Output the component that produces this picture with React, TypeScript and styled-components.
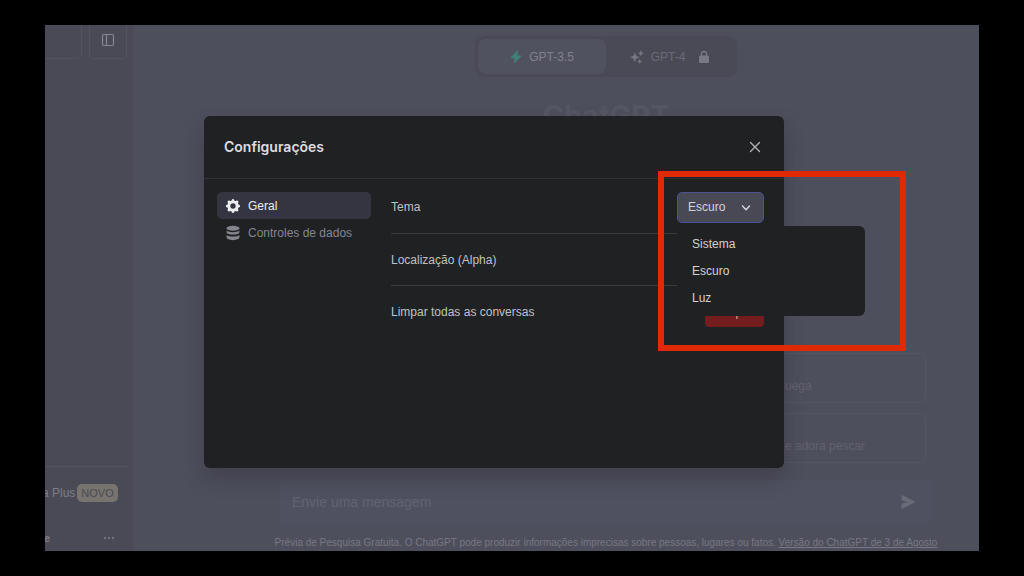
import React from "react";
import styled, { createGlobalStyle } from "styled-components";

const GlobalStyle = createGlobalStyle`
  *, *::before, *::after { box-sizing: border-box; }
  body { margin: 0; background: #000; font-family: "Liberation Sans", Arial, sans-serif; font-size: 12px; line-height: 16px; }
  button, input, select { font: inherit; color: inherit; }
  ul, h1, h2, p { margin: 0; padding: 0; }
  ul { list-style: none; }
`;

const Page = styled.div`
  min-height: 100vh;
  padding: 25px 45px;
  display: flex;
`;

const Frame = styled.div`
  position: relative;
  flex: 1;
  min-width: 0;
  display: flex;
  overflow: hidden;
  background: #4e4f5d;
`;

const Sidebar = styled.aside`
  width: 88px;
  flex: none;
  display: flex;
  flex-direction: column;
  justify-content: space-between;
  background: #494a56;
  color: #7d7e8a;
`;

const SideTop = styled.div`
  display: flex;
  gap: 7px;
`;

const SideButton = styled.button<{ $flush?: boolean }>`
  width: ${(p) => (p.$flush ? "37px" : "38px")};
  height: 34px;
  padding: 0 0 4px;
  display: flex;
  align-items: center;
  justify-content: center;
  background: none;
  border: 1px solid #52535f;
  border-top: 0;
  border-left-width: ${(p) => (p.$flush ? "0" : "1px")};
  border-radius: ${(p) => (p.$flush ? "0 0 5px 0" : "0 0 5px 5px")};
`;

const SideBottom = styled.div`
  margin: 0 6px 0 0;
  border-top: 1px solid #52535f;
  padding: 16px 0 3px;
`;

const SideRow = styled.div`
  display: flex;
  align-items: center;
  justify-content: space-between;
  height: 20px;
  padding-right: 12px;
  white-space: nowrap;

  & + & { margin-top: 25px; }
`;

const Badge = styled.span`
  padding: 0 4px;
  border-radius: 5px;
  background: #77736e;
  color: #4b4b53;
  font-size: 11px;
  line-height: 18px;
`;

const PlusLabel = styled.span`
  display: flex;
  gap: 2px;
  align-items: center;
  margin-left: -3px;
`;

const UserInitial = styled.b`
  margin-left: -1px;
  font-size: 11px;
`;

const MoreButton = styled.button`
  padding: 0;
  border: 0;
  background: none;
  display: flex;
`;

const Main = styled.main`
  flex: 1;
  min-width: 0;
  display: flex;
  flex-direction: column;
  align-items: center;
  padding: 11px 47px 0 147px;
`;

const ModelSwitch = styled.div`
  display: flex;
  width: 262px;
  padding: 3px;
  border-radius: 9px;
  background: #494a56;
`;

const ModelButton = styled.button<{ $active?: boolean }>`
  flex: 1;
  height: 35px;
  display: flex;
  align-items: center;
  justify-content: center;
  gap: 7px;
  border: 0;
  border-radius: 7px;
  background: ${(p) => (p.$active ? "#51525f" : "none")};
  color: ${(p) => (p.$active ? "#80818c" : "#6a6b77")};
`;

const LockWrap = styled.span`
  display: flex;
  padding-left: 6px;
`;

const Brand = styled.h1`
  margin-top: 21px;
  color: #565764;
  font-family: Inter, sans-serif;
  font-size: 29px;
  line-height: 36px;
  font-weight: 700;
`;

const Examples = styled.div`
  margin-top: auto;
  width: 100%;
  padding-right: 6px;
  display: flex;
  flex-direction: column;
  align-items: flex-end;
  gap: 10px;
`;

const ExampleCard = styled.button`
  width: 172px;
  height: 50px;
  padding: 16px 0 0 30px;
  text-align: left;
  background: none;
  border: 1px solid #555663;
  border-radius: 6px;
  color: #61626e;
`;

const Composer = styled.form`
  width: 100%;
  height: 44px;
  margin-top: 17px;
  padding: 0 16px 0 12px;
  display: flex;
  align-items: center;
  border-radius: 6px;
  background: #505160;
`;

const MessageInput = styled.input`
  flex: 1;
  min-width: 0;
  padding: 0;
  border: 0;
  outline: 0;
  background: none;
  font-size: 14px;
  &::placeholder { color: #626371; opacity: 1; }
`;

const SendButton = styled.button`
  padding: 0;
  border: 0;
  background: none;
  display: flex;
`;

const Footnote = styled.p`
  margin: 11px -20px 0;
  color: #777884;
  font-size: 10px;
  white-space: nowrap;
  a { color: inherit; }
`;

const Overlay = styled.div`
  position: absolute;
  inset: 0;
  display: flex;
  align-items: flex-start;
  justify-content: center;
  padding: 91px 36px 0 0;
`;

const Dialog = styled.section`
  position: relative;
  width: 580px;
  min-height: 352px;
  border-radius: 6px;
  background: #202123;
  color: #c0c0c3;
  box-shadow: 0 10px 20px rgba(32, 33, 40, 0.3);
`;

const DialogHeader = styled.header`
  height: 63px;
  padding: 0 20px;
  display: flex;
  align-items: center;
  justify-content: space-between;
  border-bottom: 1px solid #303134;
`;

const DialogTitle = styled.h2`
  color: #dedee0;
  font-family: Inter, sans-serif;
  font-size: 14px;
  line-height: 20px;
  font-weight: 600;
`;

const CloseButton = styled.button`
  padding: 0;
  border: 0;
  background: none;
  display: flex;
  color: #b0b0b5;
`;

const DialogBody = styled.div`
  display: flex;
  gap: 20px;
  padding: 2px 20px 0 13px;
`;

const Tabs = styled.nav`
  width: 154px;
  padding-top: 11px;
`;

const Tab = styled.button<{ $active?: boolean }>`
  width: 100%;
  height: 27px;
  padding: 0 8px;
  display: flex;
  align-items: center;
  gap: 7px;
  border: 0;
  border-radius: 5px;
  background: ${(p) => (p.$active ? "#343541" : "none")};
  color: ${(p) => (p.$active ? "#ececf1" : "#85858f")};
`;

const Settings = styled.div`
  flex: 1;
`;

const SettingRow = styled.div`
  height: 52px;
  display: flex;
  align-items: center;
  justify-content: space-between;

  & + & { border-top: 1px solid #3b3c40; }
`;

const SelectBox = styled.div`
  position: relative;
  width: 87px;
  color: #d2d2d8;

  svg { position: absolute; right: 13px; top: 11px; pointer-events: none; }
`;

const ThemeSelect = styled.select`
  display: block;
  width: 100%;
  height: 31px;
  padding: 0 10px;
  appearance: none;
  border: 1px solid #4d5390;
  border-radius: 5px;
  background: #484955;
  outline: 0;
`;

const Menu = styled.ul`
  position: absolute;
  z-index: 1;
  top: 34px;
  left: 0;
  width: 188px;
  padding: 5px 0 4px;
  border-radius: 6px;
  background: #202123;
`;

const MenuItem = styled.button`
  width: 100%;
  height: 27px;
  display: block;
  padding: 0 15px;
  border: 0;
  background: none;
  color: #d2d2d6;
  text-align: left;
`;

const DangerButton = styled.button`
  height: 31px;
  width: 59px;
  padding: 0;
  border: 0;
  border-radius: 4px;
  background: #731d1f;
  color: #cfb5b6;
`;

const Highlight = styled.div`
  position: absolute;
  z-index: 2;
  top: 55px;
  right: -122px;
  width: 248px;
  height: 180px;
  border: 6px solid #e02a05;
  pointer-events: none;
`;

const PanelIcon = () => (
  <svg width="14" height="14" viewBox="0 0 14 14" fill="none" stroke="#858691" strokeWidth="1.2">
    <rect x="1.5" y="1.5" width="11" height="11" rx="1.2" />
    <path d="M5.5 1.5v11" />
  </svg>
);

const DotsIcon = () => (
  <svg width="12" height="12" viewBox="0 0 12 12" fill="#71727e">
    <circle cx="2" cy="6" r="1.2" />
    <circle cx="6" cy="6" r="1.2" />
    <circle cx="10" cy="6" r="1.2" />
  </svg>
);

const BoltIcon = () => (
  <svg width="12" height="14" viewBox="0 0 12 14" fill="#418079">
    <path d="M7.2.8.6 7.4c-.4.4-.1.9.4.9h3.5L3.8 13c-.1.4.3.5.6.2l6.9-6.9c.4-.4.1-.9-.4-.9H7.4L8 1.2c.1-.5-.4-.8-.8-.4Z" />
  </svg>
);

const SparklesIcon = () => (
  <svg width="14" height="14" viewBox="0 0 14 14" fill="#777883" stroke="#777883" strokeWidth=".4">
    <path d="M4.8 2.8 6 6l3.2 1.2L6 8.4l-1.2 3.2-1.2-3.200L.4 7.200 3.600 6Z" />
    <path d="m10.800.6.7 1.900 1.900.7-1.900.7-.7 1.900-.7-1.900-1.900-.7 1.900-.7Z" />
    <path d="m9.600 9.200.6 1.600 1.600.6-1.600.6-.6 1.600-.6-1.600-1.600-.6 1.600-.6Z" />
  </svg>
);

const LockIcon = () => (
  <svg width="12" height="14" viewBox="0 0 12 14">
    <path d="M3.500 6.500V4a2.500 2.500 0 0 1 5 0v2.500" fill="none" stroke="#787984" strokeWidth="1.300" />
    <rect x="1" y="5.500" width="10" height="7.500" rx="1.500" fill="#787984" />
  </svg>
);

const SendIcon = () => (
  <svg width="16" height="16" viewBox="0 0 16 16" fill="#696a77">
    <path d="M1.500 1.800c0-.6.500-.9 1-.6l12 6.100c.5.300.5 1 0 1.300l-12 6.200c-.5.300-1 0-1-.6V9.600l6.300-1.600-6.300-1.700Z" />
  </svg>
);

const CloseIcon = () => (
  <svg width="18" height="18" viewBox="0 0 18 18" stroke="currentColor" strokeWidth="1.400" strokeLinecap="round">
    <path d="m4.500 4.500 9 9M13.500 4.500l-9 9" />
  </svg>
);

const GearIcon = () => (
  <svg width="16" height="16" viewBox="1 1 18 18" fill="currentColor">
    <path
      fillRule="evenodd"
      clipRule="evenodd"
      d="M11.490 3.170c-.38-1.560-2.600-1.560-2.980 0a1.532 1.532 0 0 1-2.286.948c-1.372-.836-2.942.734-2.106 2.106.54.886.061 2.042-.947 2.287-1.561.379-1.561 2.600 0 2.978a1.532 1.532 0 0 1 .947 2.287c-.836 1.372.734 2.942 2.106 2.106a1.532 1.532 0 0 1 2.287.947c.379 1.561 2.600 1.561 2.978 0a1.533 1.533 0 0 1 2.287-.947c1.372.836 2.942-.734 2.106-2.106a1.533 1.533 0 0 1 .947-2.287c1.561-.379 1.561-2.600 0-2.978a1.532 1.532 0 0 1-.947-2.287c.836-1.372-.734-2.942-2.106-2.106a1.532 1.532 0 0 1-2.287-.947ZM10 13a3 3 0 1 0 0-6 3 3 0 0 0 0 6Z"
    />
  </svg>
);

const DatabaseIcon = () => (
  <svg width="16" height="16" viewBox="0 0 15 15" fill="currentColor">
    <ellipse cx="7.500" cy="3" rx="6" ry="2.400" />
    <path d="M1.500 5.200c1.200 1 3.400 1.500 6 1.500s4.800-.5 6-1.500v1.500c0 1.300-2.700 2.300-6 2.300s-6-1-6-2.300Z" />
    <path d="M1.500 9.300c1.200 1 3.400 1.500 6 1.500s4.800-.5 6-1.500v2.500c0 1.300-2.700 2.400-6 2.400s-6-1.100-6-2.400Z" />
  </svg>
);

const ChevronIcon = () => (
  <svg width="10" height="10" viewBox="0 0 10 10" fill="none" stroke="currentColor" strokeWidth="1.500" strokeLinecap="round" strokeLinejoin="round">
    <path d="m1.500 3 3.500 3.700L8.500 3" />
  </svg>
);

const themes = ["Sistema", "Escuro", "Luz"];
const examples = ["uega", "e adora pescar"];

export default function App() {
  return (
    <Page>
      <GlobalStyle />
      <Frame>
        <Sidebar>
          <SideTop>
            <SideButton $flush aria-label="Nova conversa" />
            <SideButton aria-label="Ocultar barra lateral">
              <PanelIcon />
            </SideButton>
          </SideTop>
          <SideBottom>
            <SideRow>
              <PlusLabel>
                a Plus <Badge>NOVO</Badge>
              </PlusLabel>
            </SideRow>
            <SideRow>
              <UserInitial>e</UserInitial>
              <MoreButton aria-label="Mais opções">
                <DotsIcon />
              </MoreButton>
            </SideRow>
          </SideBottom>
        </Sidebar>

        <Main>
          <ModelSwitch>
            <ModelButton $active>
              <BoltIcon /> GPT-3.5
            </ModelButton>
            <ModelButton>
              <SparklesIcon /> GPT-4
              <LockWrap>
                <LockIcon />
              </LockWrap>
            </ModelButton>
          </ModelSwitch>
          <Brand>ChatGPT</Brand>
          <Examples>
            {examples.map((text) => (
              <ExampleCard key={text}>{text}</ExampleCard>
            ))}
          </Examples>
          <Composer>
            <MessageInput aria-label="Mensagem" placeholder="Envie uma mensagem" />
            <SendButton type="button" aria-label="Enviar">
              <SendIcon />
            </SendButton>
          </Composer>
          <Footnote>
            Prévia de Pesquisa Gratuita. O ChatGPT pode produzir informações imprecisas sobre pessoas, lugares ou fatos.{" "}
            <a href="#versao">Versão do ChatGPT de 3 de Agosto</a>
          </Footnote>
        </Main>

        <Overlay>
          <Dialog role="dialog" aria-labelledby="dialog-title">
            <DialogHeader>
              <DialogTitle id="dialog-title">Configurações</DialogTitle>
              <CloseButton aria-label="Fechar">
                <CloseIcon />
              </CloseButton>
            </DialogHeader>
            <DialogBody>
              <Tabs>
                <Tab $active>
                  <GearIcon /> Geral
                </Tab>
                <Tab>
                  <DatabaseIcon /> Controles de dados
                </Tab>
              </Tabs>
              <Settings>
                <SettingRow>
                  <label htmlFor="theme">Tema</label>
                  <SelectBox>
                    <ThemeSelect id="theme" defaultValue="Escuro">
                      {themes.map((theme) => (
                        <option key={theme}>{theme}</option>
                      ))}
                    </ThemeSelect>
                    <ChevronIcon />
                    <Menu>
                      {themes.map((theme) => (
                        <li key={theme}>
                          <MenuItem>{theme}</MenuItem>
                        </li>
                      ))}
                    </Menu>
                  </SelectBox>
                </SettingRow>
                <SettingRow>Localização (Alpha)</SettingRow>
                <SettingRow>
                  Limpar todas as conversas
                  <DangerButton>Limpar</DangerButton>
                </SettingRow>
              </Settings>
            </DialogBody>
            <Highlight />
          </Dialog>
        </Overlay>
      </Frame>
    </Page>
  );
}
